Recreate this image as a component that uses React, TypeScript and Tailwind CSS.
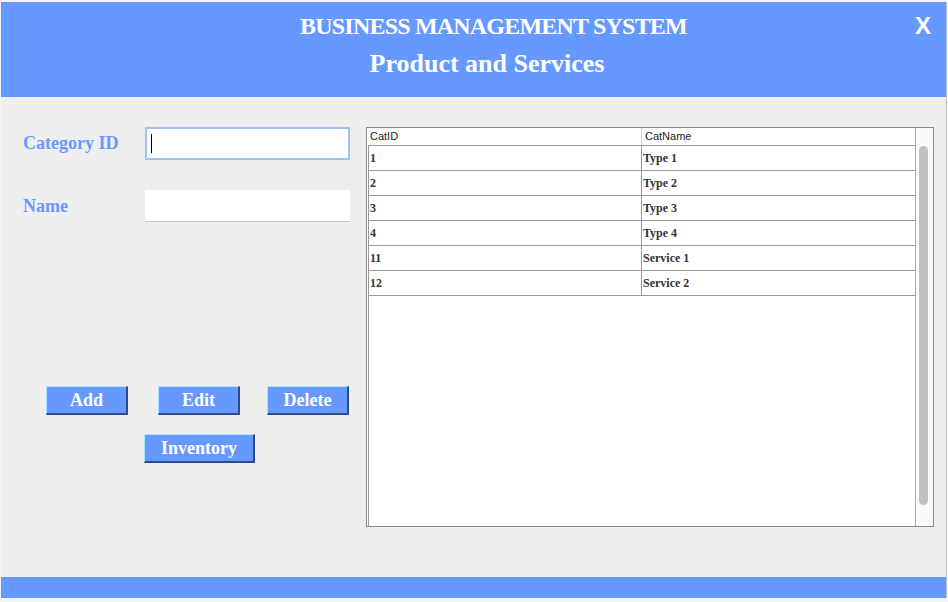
import React from 'react';

const rows = [
  { id: '1', name: 'Type 1' },
  { id: '2', name: 'Type 2' },
  { id: '3', name: 'Type 3' },
  { id: '4', name: 'Type 4' },
  { id: '11', name: 'Service 1' },
  { id: '12', name: 'Service 2' },
];

const serif = "font-['Liberation_Serif',serif]";

const ActionButton: React.FC<{ label: string; width: string }> = ({ label, width }) => (
  <button
    className={`${width} h-[29px] bg-[#6699ff] text-white text-[18px] font-bold leading-none ${serif} border-t border-l border-t-[#a6e4ff] border-l-[#a6e4ff] border-b-2 border-r-2 border-b-[#2f4a86] border-r-[#2f4a86]`}
  >
    {label}
  </button>
);

const App: React.FC = () => {
  return (
    <div className="w-[948px] h-[602px] bg-[#f4f4f4] overflow-hidden">
      <div className="ml-px mt-[2px] w-[946px] h-[596px] bg-[#eeeeee] border-r border-[#c4c4c4] flex flex-col">
        {/* header */}
        <header className="h-[95px] bg-[#6699ff] relative flex flex-col items-center text-white">
          <h1 className={`mt-[9px] pl-[40px] text-[24px] font-bold leading-[30px] tracking-[-0.8px] ${serif}`}>
            BUSINESS MANAGEMENT SYSTEM
          </h1>
          <h2 className={`mt-[8px] pl-[27px] text-[26px] font-bold leading-[30px] ${serif}`}>
            Product and Services
          </h2>
          <span className="absolute right-[15px] top-[6px] text-[24px] font-bold font-['Liberation_Sans',sans-serif]">
            X
          </span>
        </header>

        {/* body */}
        <div className="flex-1 flex">
          <div className="w-[365px] pt-[30px]">
            <div className="flex items-center">
              <label className={`w-[144px] pl-[22px] text-[18px] font-bold text-[#6699ff] ${serif}`}>
                Category ID
              </label>
              <div className="w-[205px] h-[33px] bg-white border-2 border-[#9cc4f2] flex items-center pl-[4px]">
                <span className="w-px h-[19px] bg-black" />
              </div>
            </div>
            <div className="flex items-center mt-[30px]">
              <label className={`w-[144px] pl-[22px] text-[18px] font-bold text-[#6699ff] ${serif}`}>
                Name
              </label>
              <div className="w-[205px] h-[32px] bg-white border-b border-[#c8c8c8]" />
            </div>

            <div className="flex mt-[164px] pl-[45px]">
              <ActionButton label="Add" width="w-[82px]" />
              <div className="ml-[30px]">
                <ActionButton label="Edit" width="w-[82px]" />
              </div>
              <div className="ml-[27px]">
                <ActionButton label="Delete" width="w-[82px]" />
              </div>
            </div>
            <div className="mt-[19px] pl-[143px]">
              <ActionButton label="Inventory" width="w-[111px]" />
            </div>
          </div>

          {/* table */}
          <div className="mt-[30px] w-[568px] h-[400px] bg-white border border-[#8a8a8a] flex">
            <div className="flex-1 flex flex-col">
              <div className="h-[17px] flex text-[11px] text-[#222] font-['Liberation_Sans',sans-serif]">
                <div className="w-[274px] pl-[3px] leading-[17px]">CatID</div>
                <div className="flex-1 pl-[3px] leading-[17px] border-l border-[#d0d0d0]">CatName</div>
              </div>
              <div className="flex-1 ml-px border-l border-[#999]">
                {rows.map((r) => (
                  <div key={r.id} className={`h-[25px] flex border-t border-[#999] text-[12px] font-bold text-[#333] ${serif}`}>
                    <div className="w-[272px] pl-px leading-[24px]">{r.id}</div>
                    <div className="flex-1 pl-[1px] leading-[24px] border-l border-[#999]">{r.name}</div>
                  </div>
                ))}
                <div className="border-t border-[#999]" />
              </div>
            </div>
            <div className="w-[18px] border-l border-[#aaa] bg-[#fafafa] pt-[17px] pl-[3px]">
              <div className="w-[9px] h-[359px] mt-px rounded-full bg-[#c1c1c1]" />
            </div>
          </div>
        </div>

        {/* footer */}
        <footer className="h-[21px] bg-[#6699ff]" />
      </div>
    </div>
  );
};

export default App;
